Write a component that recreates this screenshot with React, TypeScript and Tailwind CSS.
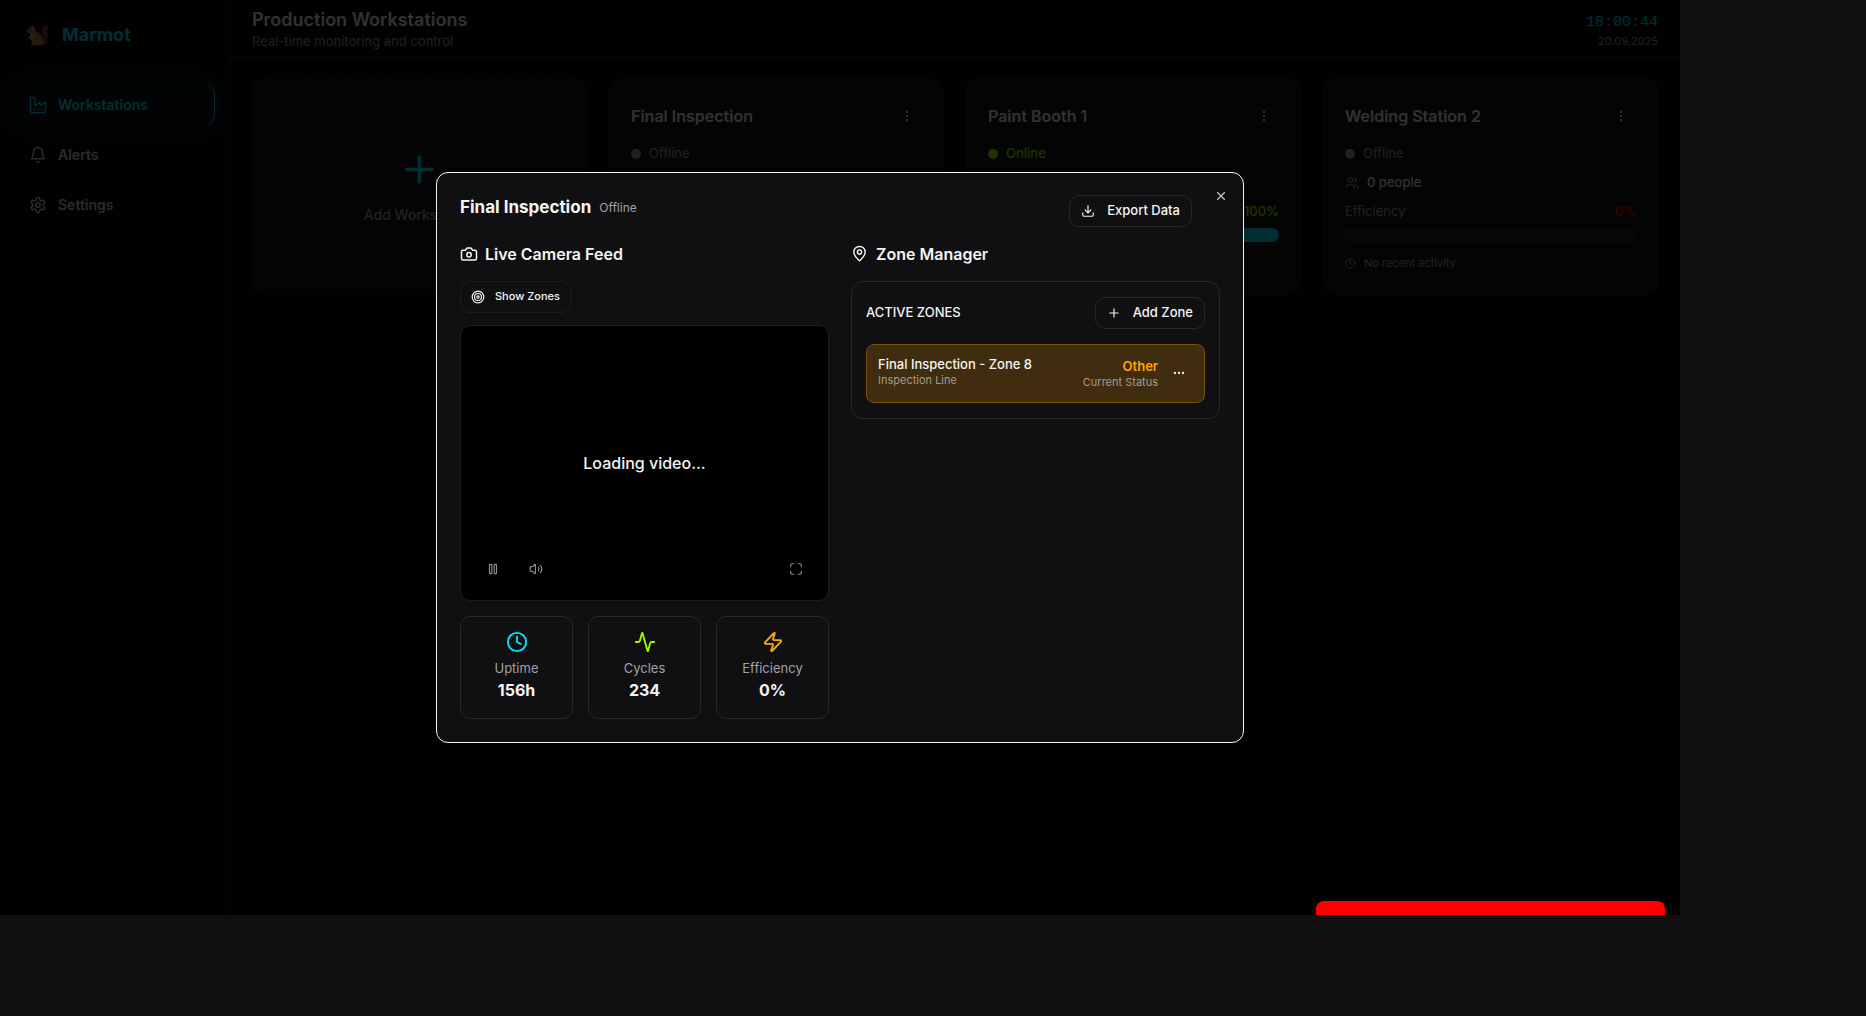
import React from "react";
import {
  Activity,
  Clock,
  Download,
  Ellipsis,
  EllipsisVertical,
  MapPin,
  Maximize,
  Plus,
  Target,
  Users,
  Volume2,
  X,
  Zap,
} from "lucide-react";

type IconProps = { size: number };

function Outline({ size, children }: IconProps & { children: React.ReactNode }) {
  return (
    <svg
      width={size}
      height={size}
      viewBox="0 0 24 24"
      fill="none"
      stroke="currentColor"
      strokeWidth="2"
      strokeLinecap="round"
      strokeLinejoin="round"
      aria-hidden="true"
      className="shrink-0"
    >
      {children}
    </svg>
  );
}

function FactoryIcon({ size }: IconProps) {
  return (
    <Outline size={size}>
      <path d="M2 20a2 2 0 0 0 2 2h16a2 2 0 0 0 2-2V8l-7 5V8l-7 5V4a2 2 0 0 0-2-2H4a2 2 0 0 0-2 2Z" />
      <path d="M17 18h1" />
      <path d="M12 18h1" />
      <path d="M7 18h1" />
    </Outline>
  );
}

function BellIcon({ size }: IconProps) {
  return (
    <Outline size={size}>
      <path d="M6 8a6 6 0 0 1 12 0c0 7 3 9 3 9H3s3-2 3-9" />
      <path d="M10.3 21a1.94 1.94 0 0 0 3.4 0" />
    </Outline>
  );
}

function GearIcon({ size }: IconProps) {
  return (
    <Outline size={size}>
      <path d="M12.22 2h-.44a2 2 0 0 0-2 2v.18a2 2 0 0 1-1 1.73l-.43.25a2 2 0 0 1-2 0l-.15-.08a2 2 0 0 0-2.73.73l-.22.38a2 2 0 0 0 .73 2.73l.15.1a2 2 0 0 1 1 1.72v.51a2 2 0 0 1-1 1.74l-.15.09a2 2 0 0 0-.73 2.73l.22.38a2 2 0 0 0 2.73.73l.15-.08a2 2 0 0 1 2 0l.43.25a2 2 0 0 1 1 1.73V20a2 2 0 0 0 2 2h.44a2 2 0 0 0 2-2v-.18a2 2 0 0 1 1-1.73l.43-.25a2 2 0 0 1 2 0l.15.08a2 2 0 0 0 2.73-.73l.22-.39a2 2 0 0 0-.73-2.73l-.15-.08a2 2 0 0 1-1-1.74v-.5a2 2 0 0 1 1-1.74l.15-.09a2 2 0 0 0 .73-2.73l-.22-.38a2 2 0 0 0-2.73-.73l-.15.08a2 2 0 0 1-2 0l-.43-.25a2 2 0 0 1-1-1.73V4a2 2 0 0 0-2-2z" />
      <circle cx="12" cy="12" r="3" />
    </Outline>
  );
}

function CameraIcon({ size }: IconProps) {
  return (
    <Outline size={size}>
      <path d="M14.5 4h-5L7 7H4a2 2 0 0 0-2 2v9a2 2 0 0 0 2 2h16a2 2 0 0 0 2-2V9a2 2 0 0 0-2-2h-3l-2.5-3z" />
      <circle cx="12" cy="13" r="3" />
    </Outline>
  );
}

function PauseIcon({ size }: IconProps) {
  return (
    <Outline size={size}>
      <rect x="14" y="4" width="4" height="16" rx="1" />
      <rect x="6" y="4" width="4" height="16" rx="1" />
    </Outline>
  );
}

function SquirrelLogo() {
  return (
    <svg width="22" height="22" viewBox="0 0 22 22" role="img" aria-label="Squirrel">
      <path
        d="M14 20c3 .2 4.500-1.500 4.500-4.500 0-3-2.500-5-2.500-9C16 3 17.500 1 19.500 1c1.500 0 2.200.8 2.200 2.200 0 1.300-.5 1.800-.5 3.300V16c0 3.500-2 5.500-5.500 5.500z"
        fill="#7d4238"
      />
      <path
        d="M3.500 3.800 4.200 1.500 6 3l1-1.800 1.500 2.600c1.500 1 1.500 3 1 4.200 3.500.5 7.500 3.500 8 8 .3 3-1 5.200-4 5.200H4.500c0-1.500 1.500-2 3-2-1.500-1-2.500-2-2.500-4-1.800 0-3.500-1-3.500-2.500 1 .6 2.200.4 3-.2V9.500C2 9.500.8 8.500.8 7c0-1.400 1.500-2.500 2.700-3.200z"
        fill="#c17c48"
      />
      <path d="M4.500 9.500c2 0 3 1.500 2.500 3.500-.4 1.500-.5 2.500 0 4-1.500-1-2-2-2-4z" fill="#e8b98a" />
      <path d="M7 21.200c3 0 5-1.500 5-4" stroke="#8a5230" strokeWidth=".9" fill="none" />
      <path d="M10 9.500c3.500 1 6 4 6.500 7.500" stroke="#8a5230" strokeWidth=".9" fill="none" />
      <circle cx="4.600" cy="5.800" r=".7" fill="#2a1510" />
    </svg>
  );
}

type Station = {
  name: string;
  online: boolean;
  people: number;
  efficiency: number;
};

const stations: Station[] = [
  { name: "Final Inspection", online: false, people: 0, efficiency: 0 },
  { name: "Paint Booth 1", online: true, people: 2, efficiency: 100 },
  { name: "Welding Station 2", online: false, people: 0, efficiency: 0 },
];

const navItems = [
  { label: "Workstations", icon: FactoryIcon, active: true },
  { label: "Alerts", icon: BellIcon, active: false },
  { label: "Settings", icon: GearIcon, active: false },
];

const stats = [
  { label: "Uptime", value: "156h", icon: Clock, color: "text-[#00e5ff]" },
  { label: "Cycles", value: "234", icon: Activity, color: "text-[#99ff00]" },
  { label: "Efficiency", value: "0%", icon: Zap, color: "text-[#ffa500]" },
];

function Sidebar() {
  return (
    <aside className="flex w-[230px] shrink-0 flex-col border-r border-[#27272a] bg-[#080809]">
      <div className="flex h-[69px] items-center gap-[14px] px-[26px]">
        <SquirrelLogo />
        <span className="text-lg font-bold text-[#00e5ff]">Marmot</span>
      </div>
      <nav className="flex flex-col gap-[7px] px-[14px] pt-[14px]">
        {navItems.map(({ label, icon: Icon, active }) => (
          <a
            key={label}
            href="#"
            className={
              active
                ? "flex h-[43px] items-center gap-[11px] rounded-xl border-r border-[#00e5ff] bg-[#00e5ff]/5 px-[15px] text-sm font-semibold text-[#00e5ff] shadow-[0_0_18px_rgba(0,229,255,0.2)]"
                : "flex h-[43px] items-center gap-[11px] rounded-xl px-[15px] text-sm font-semibold text-[#d4d4d8]"
            }
          >
            <Icon size={18} />
            {label}
          </a>
        ))}
      </nav>
    </aside>
  );
}

function StationCard({ name, online, people, efficiency }: Station) {
  return (
    <article className="flex flex-col rounded-xl border border-[#27272a] bg-[#18181b] px-[21px] pt-5 pb-[22px]">
      <div className="flex h-8 items-center justify-between">
        <h2 className="text-base font-semibold text-[#f4f4f5]">{name}</h2>
        <button type="button" aria-label={`${name} menu`} className="px-2 text-[#f4f4f5]">
          <EllipsisVertical size={14} />
        </button>
      </div>
      <div className="mt-3 flex h-5 items-center gap-2">
        <span
          className={
            online ? "size-[10px] rounded-full bg-[#99ff00]" : "size-[10px] rounded-full bg-[#a1a1aa]"
          }
        />
        <span
          className={online ? "text-[13px] font-medium text-[#99ff00]" : "text-[13px] text-[#a1a1aa]"}
        >
          {online ? "Online" : "Offline"}
        </span>
      </div>
      <div className="mt-[9px] flex h-5 items-center gap-2">
        <Users size={14} className="text-[#a1a1aa]" />
        <span className="text-[13px] font-medium text-[#f4f4f5]">{people} people</span>
      </div>
      <div className="mt-[9px] flex h-5 items-center justify-between text-[13px]">
        <span className="text-[#a1a1aa]">Efficiency</span>
        <span className={online ? "font-medium text-[#99ff00]" : "font-medium text-[#ff0000]"}>
          {efficiency}%
        </span>
      </div>
      <div className="mt-[6px] h-[14px] overflow-hidden rounded-full bg-[#27272a]">
        <div className="h-full rounded-full bg-[#00e5ff]" style={{ width: `${efficiency}%` }} />
      </div>
      <div className="mt-[13px] flex h-4 items-center gap-2 text-[11px] text-[#a1a1aa]">
        <Clock size={11} />
        No recent activity
      </div>
    </article>
  );
}

function StationDialog() {
  return (
    <div className="absolute inset-0 flex items-center justify-center bg-black/80">
      <section
        role="dialog"
        aria-labelledby="dialog-title"
        className="relative w-full max-w-[808px] rounded-xl border border-[#f4f4f5] bg-[#101012] px-[23px] pt-[22px] pb-[23px] text-[#f4f4f5]"
      >
        <button
          type="button"
          aria-label="Close"
          className="absolute top-4 right-[15px] text-[#c4c4c8]"
        >
          <X size={14} />
        </button>
        <header className="flex items-start justify-between pr-7">
          <div className="flex h-[27px] items-center gap-2">
            <h2 id="dialog-title" className="text-[17px] font-bold">
              Final Inspection
            </h2>
            <span className="text-xs text-[#a1a1aa]">Offline</span>
          </div>
          <button
            type="button"
            className="flex h-8 items-center gap-3 rounded-[10px] border border-[#27272a] px-[11px] text-[13px] font-medium"
          >
            <Download size={14} />
            Export Data
          </button>
        </header>
        <div className="mt-[15px] grid grid-cols-2 gap-[22px]">
          <div className="min-w-0">
            <h3 className="flex h-6 items-center gap-[7px] text-base font-semibold">
              <CameraIcon size={18} />
              Live Camera Feed
            </h3>
            <button
              type="button"
              className="mt-[15px] flex h-8 items-center gap-[10px] rounded-[10px] border border-[#1e1e21] px-[10px] text-[11px] font-medium"
            >
              <Target size={14} />
              Show Zones
            </button>
            <div className="relative mt-3 flex aspect-[4/3] items-center justify-center overflow-hidden rounded-[10px] border border-[#1e1e21] bg-black">
              <p className="text-base font-medium text-[#f4f4f5]">Loading video...</p>
              <div className="absolute inset-x-0 bottom-0 flex items-center px-[25px] pb-6 text-[#8f8f93]">
                <button type="button" aria-label="Pause">
                  <PauseIcon size={14} />
                </button>
                <button type="button" aria-label="Volume" className="ml-[29px]">
                  <Volume2 size={14} />
                </button>
                <button type="button" aria-label="Full screen" className="ml-auto">
                  <Maximize size={14} />
                </button>
              </div>
            </div>
            <div className="mt-[15px] grid grid-cols-3 gap-[15px]">
              {stats.map(({ label, value, icon: Icon, color }) => (
                <div
                  key={label}
                  className="flex h-[103px] flex-col items-center rounded-[10px] border border-[#27272a] pt-[14px]"
                >
                  <Icon size={22} className={color} />
                  <span className="mt-[5px] text-[13px] leading-5 text-[#a1a1aa]">{label}</span>
                  <span className="text-base leading-6 font-bold">{value}</span>
                </div>
              ))}
            </div>
          </div>
          <div className="min-w-0">
            <h3 className="flex h-6 items-center gap-2 text-base font-semibold">
              <MapPin size={17} />
              Zone Manager
            </h3>
            <div className="mt-[15px] rounded-xl border border-[#27272a] px-[14px] py-[15px]">
              <div className="flex items-center justify-between">
                <h4 className="text-[13px] font-medium">ACTIVE ZONES</h4>
                <button
                  type="button"
                  className="flex h-8 items-center gap-3 rounded-[10px] border border-[#27272a] px-[11px] text-[13px] font-medium"
                >
                  <Plus size={14} />
                  Add Zone
                </button>
              </div>
              <div className="mt-[15px] flex h-[59px] items-center rounded-lg border border-[#7a500a] bg-[#402c0f] pr-[18px] pl-[11px]">
                <div className="mr-auto pb-1">
                  <p className="text-[13px] leading-[17px] font-medium">Final Inspection - Zone 8</p>
                  <p className="text-[11px] leading-[14px] text-[#a39c92]">Inspection Line</p>
                </div>
                <div className="text-right">
                  <p className="text-[13px] leading-[18px] font-semibold text-[#ffa500]">Other</p>
                  <p className="text-[11px] leading-[14px] text-[#a39c92]">Current Status</p>
                </div>
                <button type="button" aria-label="Zone menu" className="ml-[14px]">
                  <Ellipsis size={14} />
                </button>
              </div>
            </div>
          </div>
        </div>
      </section>
    </div>
  );
}

export default function App() {
  return (
    <div className="h-screen bg-[#101012] pr-[186px] pb-[101px] font-['Inter',sans-serif]">
      <div className="relative flex h-full overflow-hidden bg-[#050505]">
        <Sidebar />
        <main className="min-w-0 flex-1">
          <header className="flex h-[58px] items-center justify-between border-b border-[#27272a] px-[22px]">
            <div>
              <h1 className="text-lg leading-6 font-semibold text-[#f4f4f5]">Production Workstations</h1>
              <p className="text-[13px] leading-[18px] text-[#a1a1aa]">
                Real-time monitoring and control
              </p>
            </div>
            <div className="pt-1 text-right">
              <time className="block font-['Liberation_Mono',monospace] text-[15px] leading-5 text-[#00e5ff]">
                18:00:44
              </time>
              <time className="block text-[11px] leading-4 text-[#a1a1aa]">20.09.2025</time>
            </div>
          </header>
          <div className="grid grid-cols-4 gap-[22px] px-[22px] pt-[21px]">
            <button
              type="button"
              className="flex flex-col items-center justify-center gap-[14px] rounded-xl border border-dashed border-[#27272a] bg-[#18181b] text-sm font-medium text-[#a1a1aa]"
            >
              <Plus size={43} className="text-[#00e5ff]" />
              Add Workstation
            </button>
            {stations.map((station) => (
              <StationCard key={station.name} {...station} />
            ))}
          </div>
        </main>
        <StationDialog />
        <div
          role="alert"
          aria-label="Error"
          className="absolute right-[15px] bottom-0 h-[14px] w-[349px] rounded-t-lg bg-[#ff0000]"
        />
      </div>
    </div>
  );
}
